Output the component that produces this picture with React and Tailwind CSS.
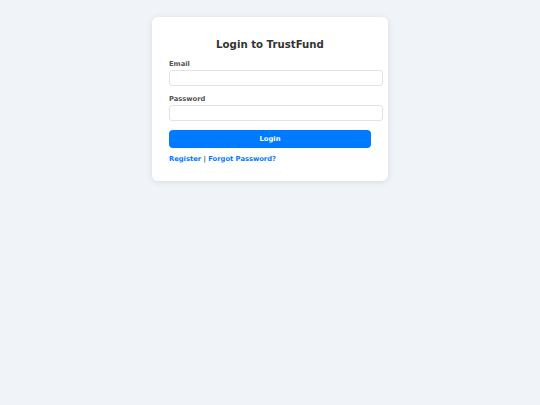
export default function App() {
  return (
    <div className="min-h-[405px] bg-[#f0f4f8] pt-[17px] font-['DejaVu_Sans',sans-serif]">
      <div className="mx-auto w-[236px] rounded-[6px] bg-white px-[17px] pt-[22px] pb-[18px] shadow-[0_1px_6px_rgba(0,0,0,0.1)]">
        <h2 className="text-center text-[10.2px] leading-[12px] font-bold text-[#333]">Login to TrustFund</h2>
        <form className="mt-[9px]">
          <label className="block text-[6.75px] leading-[8px] font-bold text-[#555]">Email</label>
          <input
            type="email"
            className="mt-[2px] box-content block h-[14px] w-full rounded-[3px] border border-[#e3e3e3] px-[5px] text-[7px]"
          />
          <label className="mt-[9px] block text-[6.75px] leading-[8px] font-bold text-[#555]">Password</label>
          <input
            type="password"
            className="mt-[2px] box-content block h-[14px] w-full rounded-[3px] border border-[#e3e3e3] px-[5px] text-[7px]"
          />
          <button
            type="button"
            className="mt-[9px] block h-[18px] w-full rounded-[4px] bg-[#007bff] text-[6.75px] font-bold text-white"
          >
            Login
          </button>
        </form>
        <p className="mt-[7px] text-[6.75px] leading-[8px] font-bold text-[#007bff]">
          <a href="#">Register</a> <span className="text-[#555]">|</span> <a href="#">Forgot Password?</a>
        </p>
      </div>
    </div>
  )
}
